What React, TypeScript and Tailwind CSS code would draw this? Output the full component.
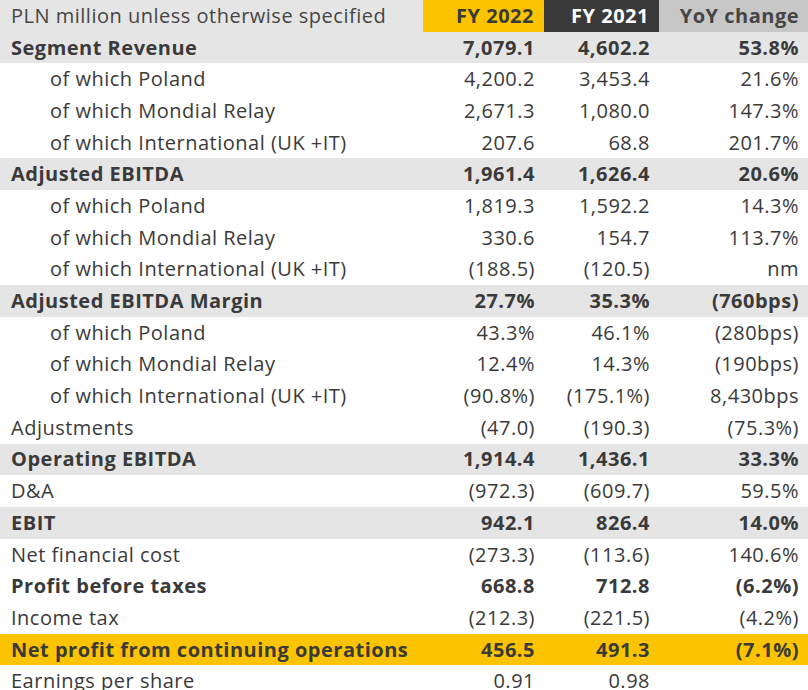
type Row = {
    label: string;
    fy22: string;
    fy21: string;
    yoy: string;
    kind?: 'band' | 'bold' | 'sub' | 'total';
};

const rows: Row[] = [
    { label: 'Segment Revenue', fy22: '7,079.1', fy21: '4,602.2', yoy: '53.8%', kind: 'band' },
    { label: 'of which Poland', fy22: '4,200.2', fy21: '3,453.4', yoy: '21.6%', kind: 'sub' },
    { label: 'of which Mondial Relay', fy22: '2,671.3', fy21: '1,080.0', yoy: '147.3%', kind: 'sub' },
    { label: 'of which International (UK +IT)', fy22: '207.6', fy21: '68.8', yoy: '201.7%', kind: 'sub' },
    { label: 'Adjusted EBITDA', fy22: '1,961.4', fy21: '1,626.4', yoy: '20.6%', kind: 'band' },
    { label: 'of which Poland', fy22: '1,819.3', fy21: '1,592.2', yoy: '14.3%', kind: 'sub' },
    { label: 'of which Mondial Relay', fy22: '330.6', fy21: '154.7', yoy: '113.7%', kind: 'sub' },
    { label: 'of which International (UK +IT)', fy22: '(188.5)', fy21: '(120.5)', yoy: 'nm', kind: 'sub' },
    { label: 'Adjusted EBITDA Margin', fy22: '27.7%', fy21: '35.3%', yoy: '(760bps)', kind: 'band' },
    { label: 'of which Poland', fy22: '43.3%', fy21: '46.1%', yoy: '(280bps)', kind: 'sub' },
    { label: 'of which Mondial Relay', fy22: '12.4%', fy21: '14.3%', yoy: '(190bps)', kind: 'sub' },
    { label: 'of which International (UK +IT)', fy22: '(90.8%)', fy21: '(175.1%)', yoy: '8,430bps', kind: 'sub' },
    { label: 'Adjustments', fy22: '(47.0)', fy21: '(190.3)', yoy: '(75.3%)' },
    { label: 'Operating EBITDA', fy22: '1,914.4', fy21: '1,436.1', yoy: '33.3%', kind: 'band' },
    { label: 'D&A', fy22: '(972.3)', fy21: '(609.7)', yoy: '59.5%' },
    { label: 'EBIT', fy22: '942.1', fy21: '826.4', yoy: '14.0%', kind: 'band' },
    { label: 'Net financial cost', fy22: '(273.3)', fy21: '(113.6)', yoy: '140.6%' },
    { label: 'Profit before taxes', fy22: '668.8', fy21: '712.8', yoy: '(6.2%)', kind: 'bold' },
    { label: 'Income tax', fy22: '(212.3)', fy21: '(221.5)', yoy: '(4.2%)' },
    { label: 'Net profit from continuing operations', fy22: '456.5', fy21: '491.3', yoy: '(7.1%)', kind: 'total' },
    { label: 'Earnings per share', fy22: '0.91', fy21: '0.98', yoy: '' },
];

// fixed column widths taken from the slide
const grid = 'grid grid-cols-[423px_121px_115px_149px] h-[31.7px] items-center';

export default function App() {
    return (
        <div className="w-[808px] h-[690px] overflow-hidden bg-white text-[#3a3a3a] font-['Open_Sans',sans-serif] text-[20px] tracking-[0.5px] leading-none">
            {/* header */}
            <div className={grid}>
                <div className="h-full flex items-center bg-[#e6e5e6] pl-[11px] text-[#454545]">PLN million unless otherwise specified</div>
                <div className="h-full flex items-center justify-end bg-[#fcc400] pr-[10px] font-bold text-[#3a3a3a]">FY 2022</div>
                <div className="h-full flex items-center justify-end bg-[#3a3a3a] pr-[10px] font-bold text-white">FY 2021</div>
                <div className="h-full flex items-center justify-end bg-[#c7c7c7] pr-[9px] font-bold text-[#454545]">YoY change</div>
            </div>

            {rows.map((r, i) => {
                const bg = r.kind === 'band' ? 'bg-[#e6e5e6]' : r.kind === 'total' ? 'bg-[#fcc400]' : 'bg-white';
                const weight = r.kind === 'band' || r.kind === 'bold' || r.kind === 'total' ? 'font-bold' : 'font-normal';
                return (
                    <div key={i} className={`${grid} ${bg} ${weight}`}>
                        <div className={r.kind === 'sub' ? 'pl-[50px]' : 'pl-[11px]'}>{r.label}</div>
                        <div className="text-right pr-[9px]">{r.fy22}</div>
                        <div className="text-right pr-[9px]">{r.fy21}</div>
                        <div className="text-right pr-[9px]">{r.yoy}</div>
                    </div>
                );
            })}
        </div>
    );
}
